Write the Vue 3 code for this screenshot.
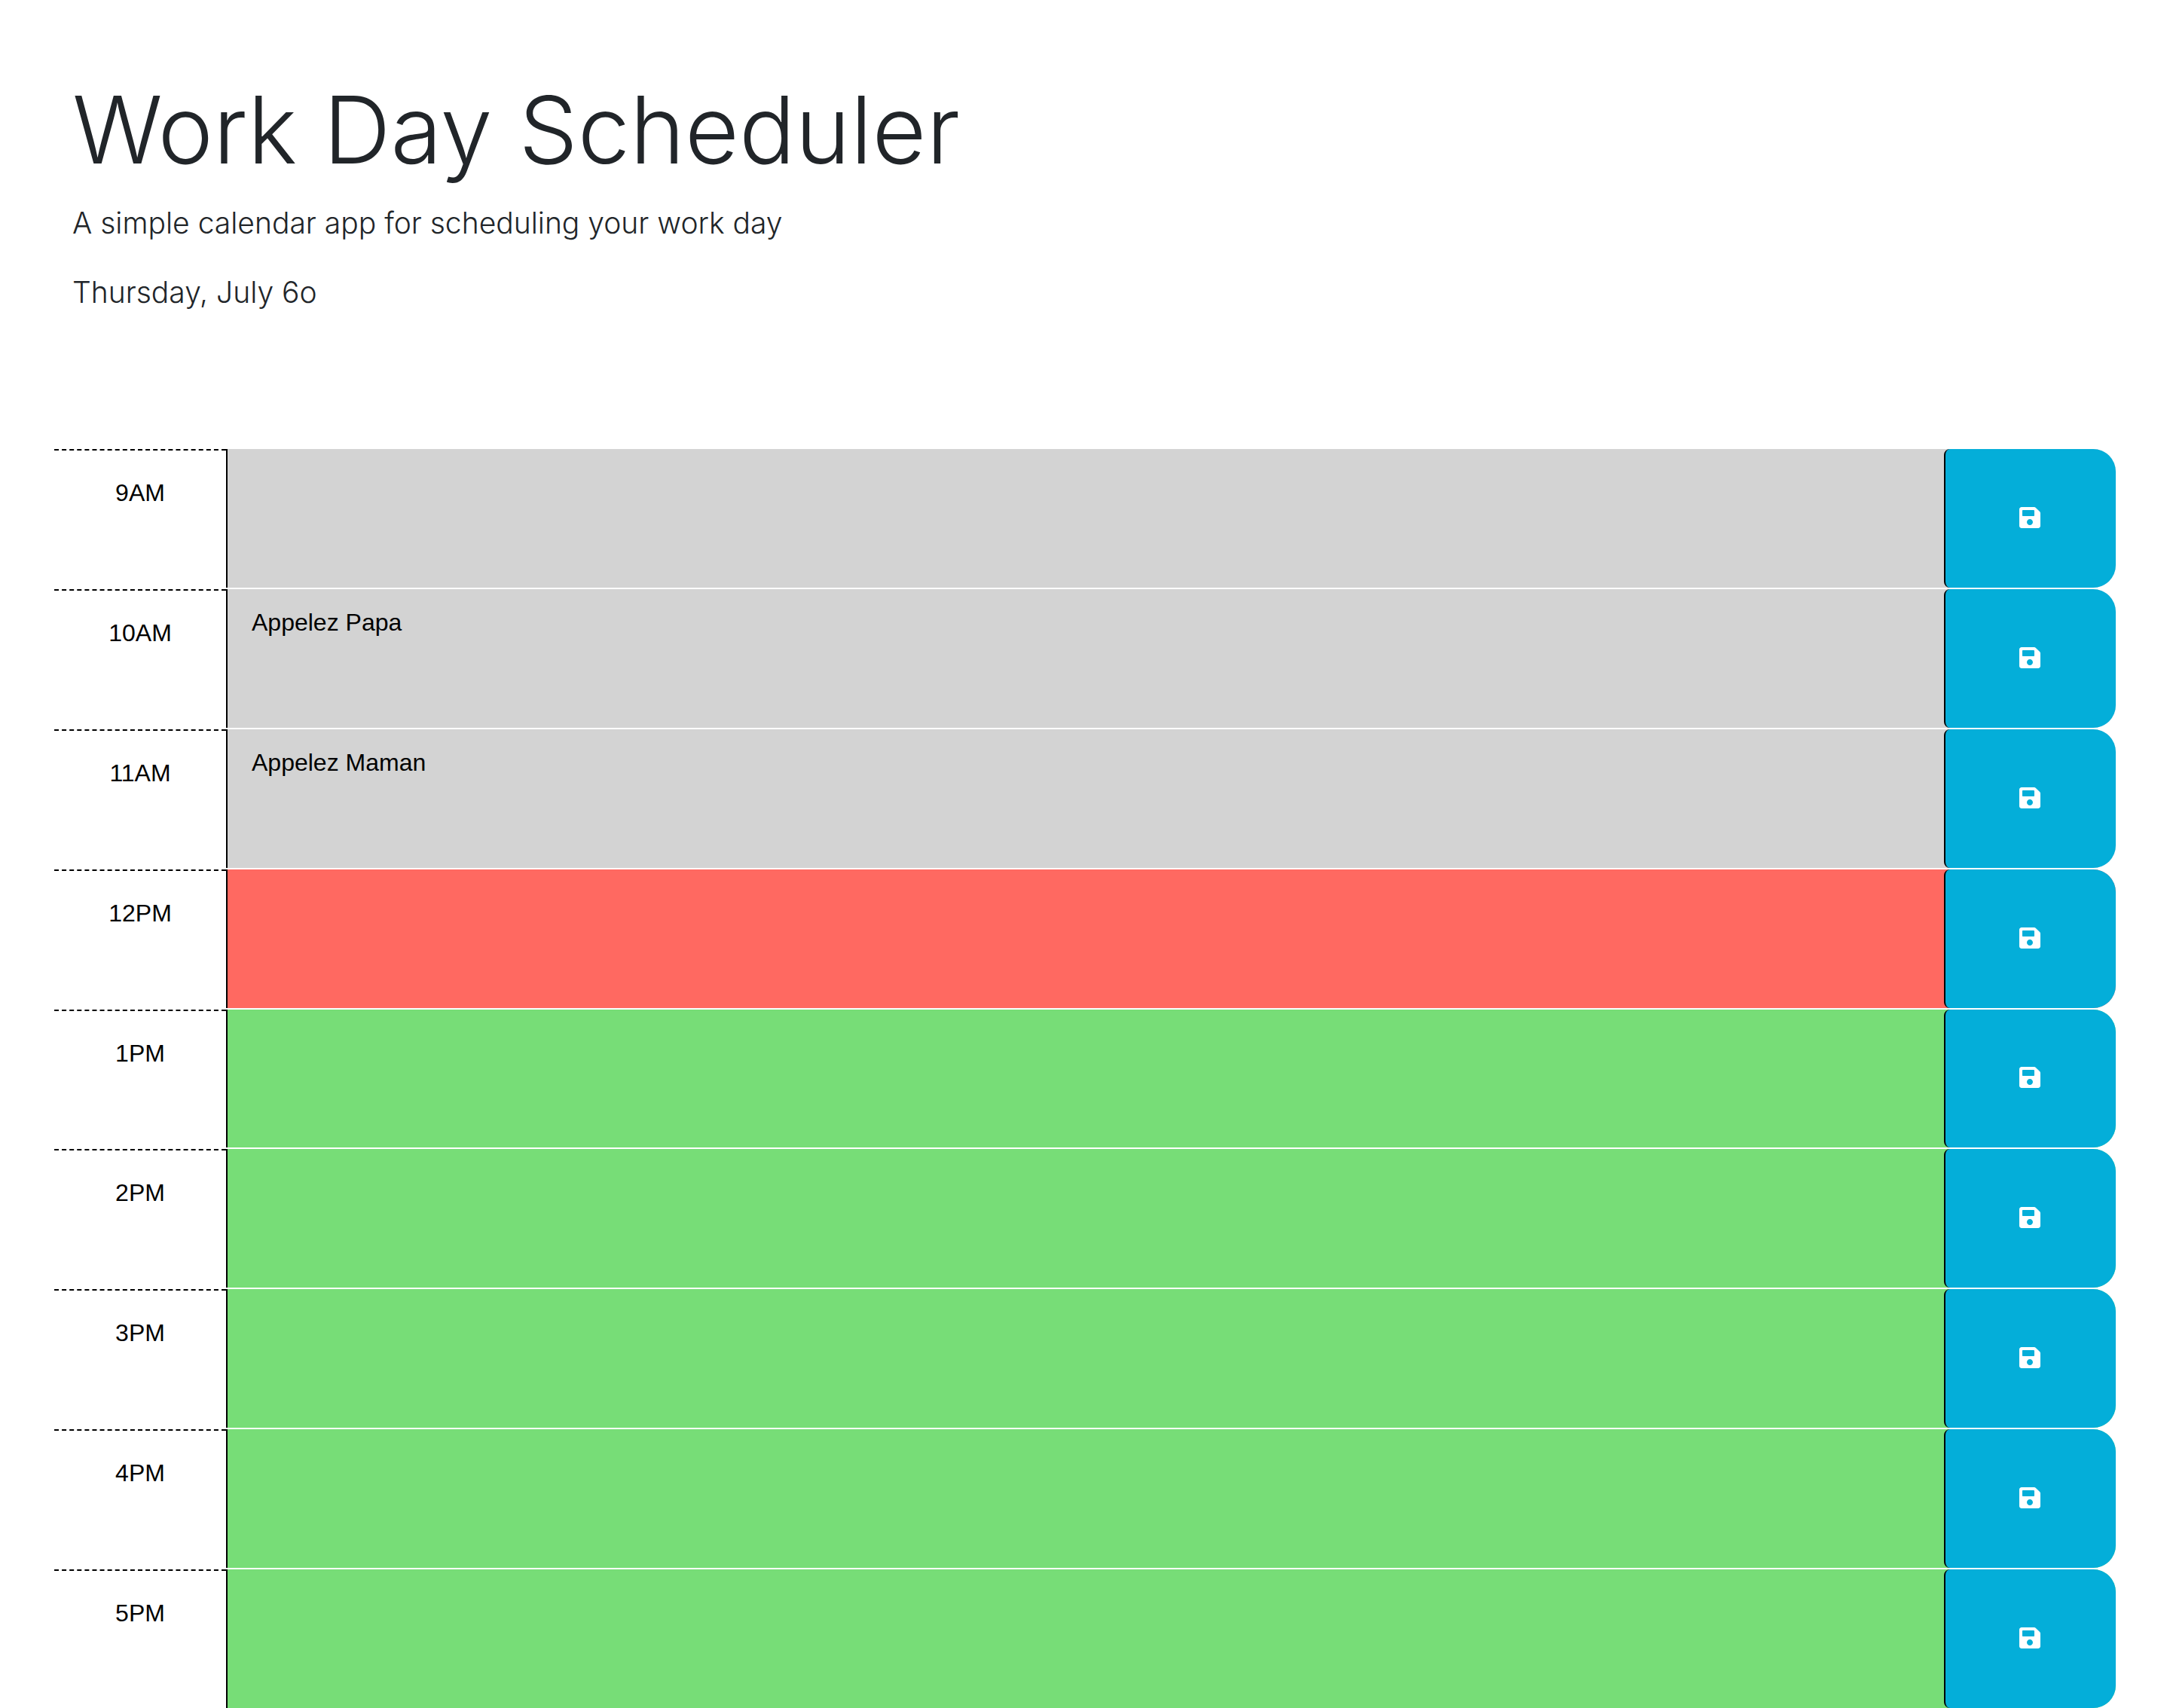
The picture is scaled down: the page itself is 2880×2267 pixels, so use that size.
<script setup>
import { reactive } from 'vue'

const slots = reactive([
  { hour: '9AM', state: 'past', note: '' },
  { hour: '10AM', state: 'past', note: 'Appelez Papa' },
  { hour: '11AM', state: 'past', note: 'Appelez Maman' },
  { hour: '12PM', state: 'present', note: '' },
  { hour: '1PM', state: 'future', note: '' },
  { hour: '2PM', state: 'future', note: '' },
  { hour: '3PM', state: 'future', note: '' },
  { hour: '4PM', state: 'future', note: '' },
  { hour: '5PM', state: 'future', note: '' },
])
</script>

<template>
  <div class="page">
    <header class="intro">
      <h1 class="title">Work Day Scheduler</h1>
      <p class="lead">A simple calendar app for scheduling your work day</p>
      <p class="lead">Thursday, July 6o</p>
    </header>

    <main class="schedule">
      <form
        v-for="slot in slots"
        :key="slot.hour"
        class="time-block"
        :class="slot.state"
        @submit.prevent
      >
        <label class="hour" :for="`note-${slot.hour}`">{{ slot.hour }}</label>
        <textarea :id="`note-${slot.hour}`" v-model="slot.note" class="note" rows="1"></textarea>
        <button class="save" type="submit" :aria-label="`Save ${slot.hour}`">
          <svg class="save-icon" viewBox="0 0 448 512" aria-hidden="true">
            <path
              d="M433.941 129.941l-83.882-83.882A48 48 0 0 0 316.118 32H48C21.49 32 0 53.49 0 80v352c0 26.51 21.49 48 48 48h352c26.51 0 48-21.49 48-48V163.882a48 48 0 0 0-14.059-33.941zM224 416c-35.346 0-64-28.654-64-64 0-35.346 28.654-64 64-64s64 28.654 64 64c0 35.346-28.654 64-64 64zm96-304.52V212c0 6.627-5.373 12-12 12H76c-6.627 0-12-5.373-12-12V108c0-6.627 5.373-12 12-12h228.52c3.183 0 6.235 1.264 8.485 3.515l3.48 3.48A11.996 11.996 0 0 1 320 111.48z"
            />
          </svg>
        </button>
      </form>
    </main>
  </div>
</template>

<style>
body {
  margin: 0;
  background: #fff;
}
</style>

<style scoped>
.page {
  display: flex;
  flex-direction: column;
  min-height: 100vh;
  font-family: "Liberation Sans", sans-serif;
  font-size: 32px;
  line-height: 48px;
  color: #000;
}

.intro {
  padding: 96px 96px 178px;
  font-family: Inter, sans-serif;
  font-weight: 300;
  color: #212529;
}

.title {
  margin: 0 0 18px;
  font-size: 124px;
  font-weight: 300;
  line-height: 152px;
}

.lead {
  margin: 0;
  font-size: 39px;
  line-height: 60px;
}

.lead + .lead {
  margin-top: 32px;
}

.schedule {
  flex: 1;
  display: grid;
  grid-auto-rows: 1fr;
  gap: 2px;
  padding: 0 72px;
}

.time-block {
  display: grid;
  grid-template-columns: 1fr 10fr 1fr;
  border-radius: 0 30px 30px 0;
}

.hour {
  padding-top: 32px;
  border-top: 2px dashed #000;
  background: #fff;
  text-align: center;
}

.note {
  box-sizing: border-box;
  width: 100%;
  margin: 0;
  padding: 20px 32px;
  border: 0;
  border-left: 2px solid #000;
  border-radius: 0;
  outline: 0;
  background: transparent;
  color: #000;
  font: inherit;
  resize: none;
}

.past {
  background: #d3d3d3;
}

.present {
  background: #ff6961;
}

.future {
  background: #77dd77;
}

.save {
  display: flex;
  align-items: center;
  justify-content: center;
  padding: 0 2px 2px 0;
  border: 0;
  border-left: 2px solid #000;
  border-radius: 8px 30px 30px 8px;
  background: #04aed9;
  color: #fff;
  cursor: pointer;
}

.save-icon {
  width: 28px;
  height: 32px;
  fill: currentColor;
}
</style>
